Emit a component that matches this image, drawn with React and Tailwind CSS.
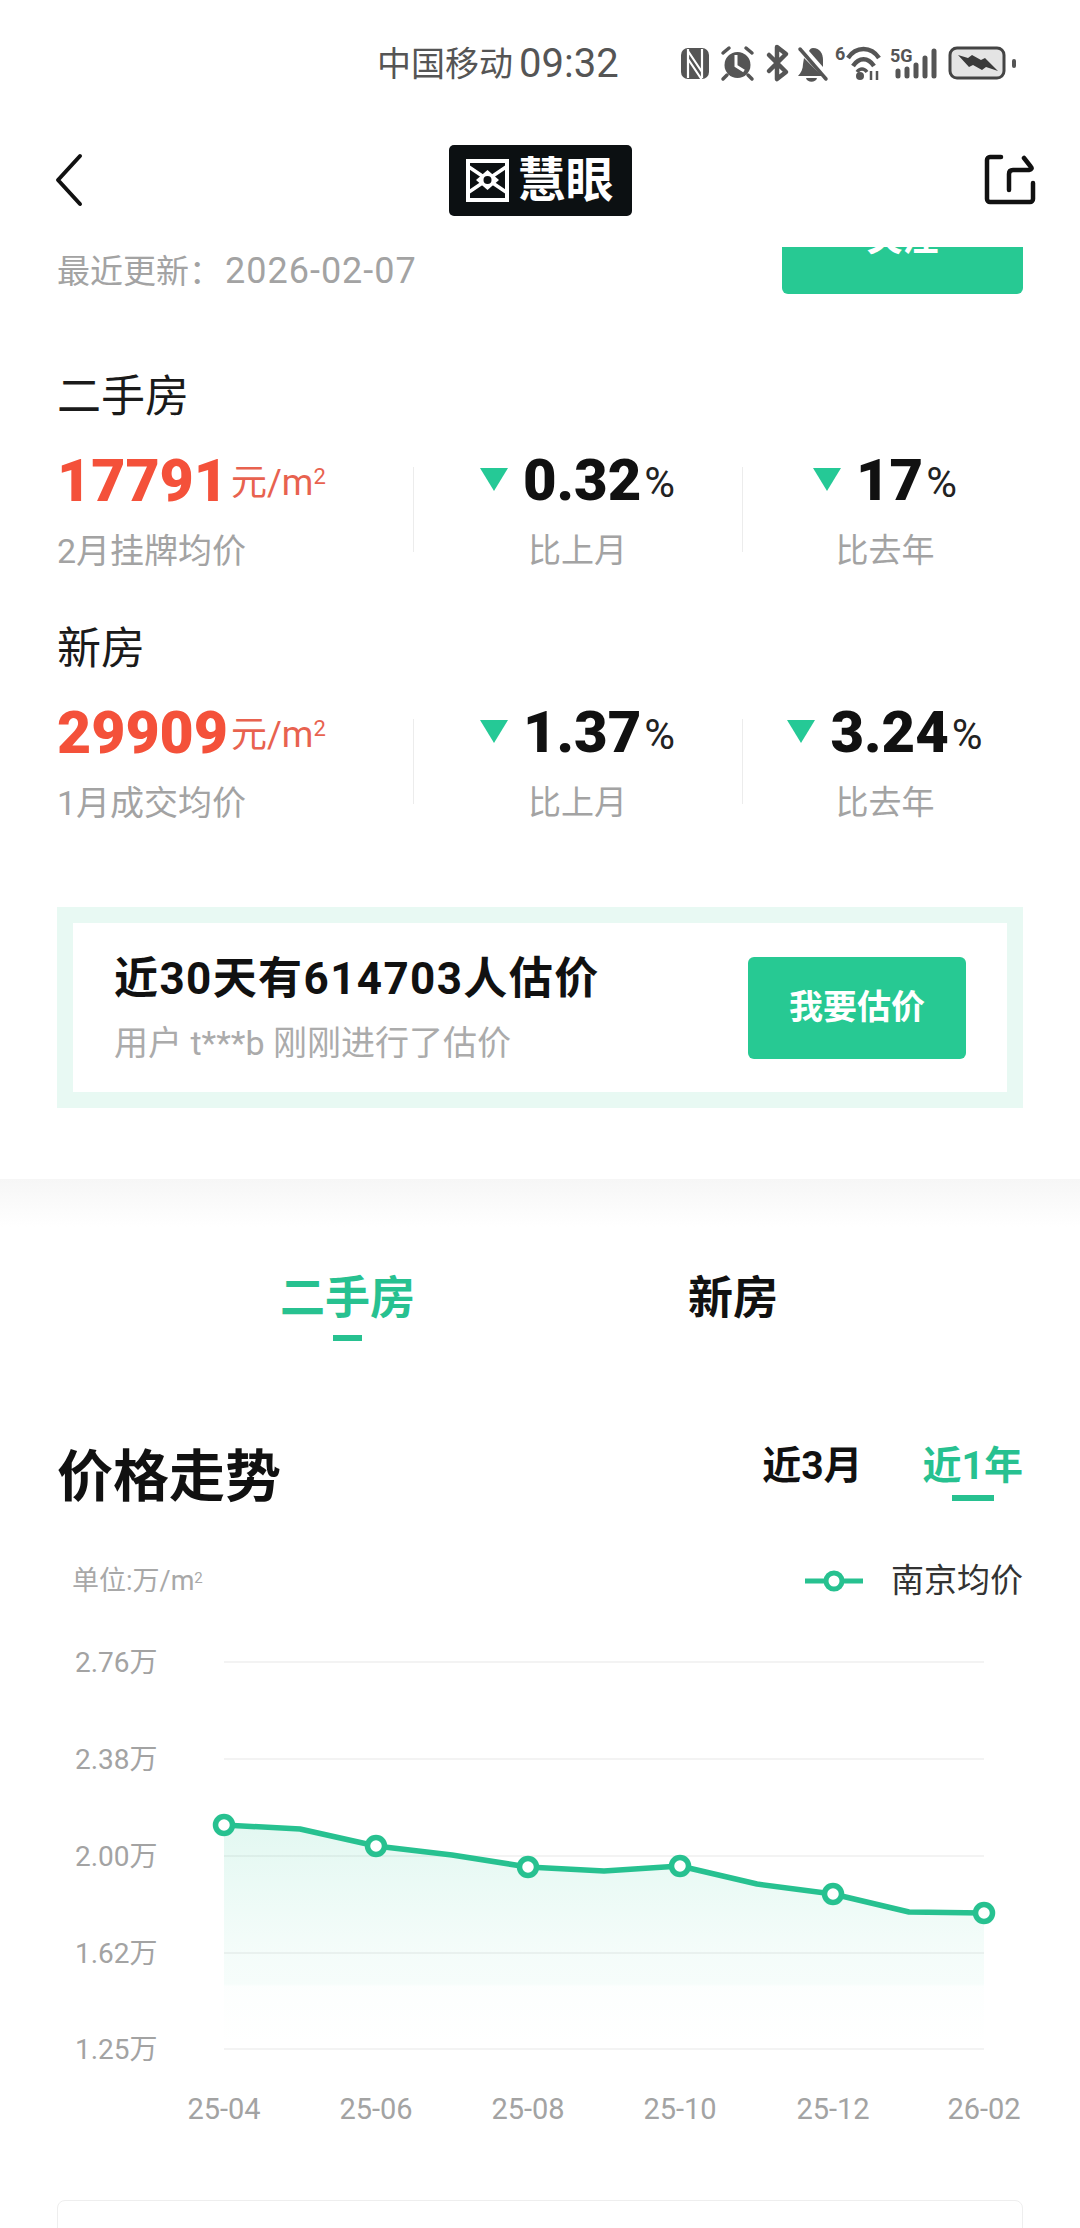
const FONT = "font-['Roboto','Noto_Sans_CJK_SC',sans-serif]";

function Tri({ className = "" }) {
  return (
    <svg width="28" height="23" viewBox="0 0 28 23" className={className}>
      <path d="M0 0H28L14 23Z" fill="#25c996" />
    </svg>
  );
}

function StatusIcons() {
  return (
    <svg width="344" height="48" viewBox="0 0 344 48" fill="none" className="block">
      {/* NFC */}
      <rect x="5" y="8" width="28" height="31" rx="7" fill="#555" />
      <path d="M12 9V38M26 9V38M12 11L26 32M12 19L26 40" stroke="#fff" strokeWidth="2.2" />
      {/* alarm */}
      <circle cx="61.5" cy="25" r="13" fill="#555" />
      <path d="M60 15V26L68 31" stroke="#fff" strokeWidth="3" />
      <path d="M47 13L53 8M76 13L70 8M51 35L47 39M72 35L76 39" stroke="#555" strokeWidth="3.5" strokeLinecap="round" />
      {/* bluetooth */}
      <path d="M93 15L110 32L101 39V7L110 14L93 31" stroke="#555" strokeWidth="4.5" strokeLinejoin="round" strokeLinecap="round" />
      {/* mute bell */}
      <path d="M137 8C144 8 147 14 147 20V27L133 11C134 9 135 8 137 8Z" fill="#555" />
      <path d="M128 18L146 36H122C125 33 127 29 127 24Z" fill="#555" />
      <path d="M130 38H141C140 43 131 43 130 38Z" fill="#555" />
      <path d="M124 9L150 39" stroke="#555" strokeWidth="3.5" strokeLinecap="round" />
      {/* wifi */}
      <text x="159" y="20" fontSize="18" fontWeight="700" fill="#555" fontFamily="Roboto">6</text>
      <path d="M172 18C180 6 195 6 203 18M177 26C183 17 192 17 198 26" stroke="#555" strokeWidth="4.5" />
      <path d="M181 32C184 28 188 28 191 32" stroke="#555" strokeWidth="3.5" />
      <circle cx="184" cy="36" r="4" fill="#555" />
      <path d="M195 31V40M201 31V40" stroke="#555" strokeWidth="2.5" />
      {/* 5G */}
      <text x="214" y="22" fontSize="18" fontWeight="700" fill="#555" fontFamily="Roboto">5G</text>
      <path d="M222 31V36M231 29V36M240 25V36M249 18V36M258 11V36" stroke="#555" strokeWidth="5" strokeLinecap="round" />
      {/* battery */}
      <rect x="274" y="8" width="54" height="30" rx="7" fill="#e4e4e4" stroke="#444" strokeWidth="3" />
      <path d="M282 15L292 18L296 15L305 20L309 18L322 31L310 27L306 30L297 25L293 27Z" fill="#3a3a3a" />
      <rect x="336" y="19" width="4" height="9" rx="2" fill="#555" />
    </svg>
  );
}

function Logo() {
  return (
    <svg width="43" height="43" viewBox="0 0 43 43" fill="none" className="block">
      <rect x="2" y="2" width="39" height="39" stroke="#fff" strokeWidth="4" />
      <path d="M3 8L40 33M40 8L3 33" stroke="#fff" strokeWidth="3.5" />
      <path d="M21.5 11L33 21L21.5 31L10 21Z" fill="#fff" />
      <circle cx="21.5" cy="21" r="4" fill="#0c1012" />
    </svg>
  );
}

function StatCol({ value, label }) {
  return (
    <div className="relative flex flex-col items-center">
      <div className="absolute left-0 top-[17px] h-[85px] w-px bg-[#ececec]" />
      <div className="flex h-[60px] items-center">
        <Tri className="mr-[15px] -mt-[2px]" />
        <span className="text-[58px] leading-none font-black text-[#111]">{value}</span>
        <span className="ml-[3px] mt-[6px] text-[42px] leading-none text-[#222]">%</span>
      </div>
      <div className="mt-[19px] text-[33px] leading-[44px] text-[#a3a3a3]">{label}</div>
    </div>
  );
}

function PriceRow({ title, price, label, a, b }) {
  return (
    <div>
      <div className="text-[44px] leading-[60px] text-[#1a1a1a]">{title}</div>
      <div className="mt-[23px] grid w-[971px] grid-cols-[356px_329px_286px]">
        <div className="flex flex-col">
          <div className="flex h-[60px] items-center">
            <span className="text-[59px] leading-none font-black text-[#f4513a]">{price}</span>
            <span className="ml-[3px] mt-[6px] text-[36px] leading-none text-[#e8624f]">
              元/m<sup className="text-[22px] leading-none">2</sup>
            </span>
          </div>
          <div className="mt-[19px] text-[34px] leading-[44px] text-[#a3a3a3]">{label}</div>
        </div>
        <StatCol value={a} label="比上月" />
        <StatCol value={b} label="比去年" />
      </div>
    </div>
  );
}

const pts = [
  [224, 1825], [300, 1829], [376, 1846], [452, 1855], [528, 1867], [604, 1871],
  [680, 1866], [757, 1884], [833, 1894], [909, 1912], [984, 1913],
];
const marks = [0, 2, 4, 6, 8, 10];
const top = 1640;

function Chart() {
  const line = pts.map((p) => `${p[0]},${p[1] - top}`).join(" ");
  const area = `224,${2049 - top} ${line} 984,${2049 - top}`;
  const grid = [1662, 1759, 1856, 1953, 2049];
  const ylab = ["2.76万", "2.38万", "2.00万", "1.62万", "1.25万"];
  const xlab = ["25-04", "25-06", "25-08", "25-10", "25-12", "26-02"];
  return (
    <svg width="1080" height="500" viewBox="0 0 1080 500" className="block">
      <defs>
        <linearGradient id="fillG" gradientUnits="userSpaceOnUse" x1="0" y1={1825 - top} x2="0" y2={2049 - top}>
          <stop offset="0" stopColor="#25c996" stopOpacity="0.13" />
          <stop offset="0.55" stopColor="#25c996" stopOpacity="0.05" />
          <stop offset="0.71" stopColor="#25c996" stopOpacity="0.04" />
          <stop offset="0.72" stopColor="#25c996" stopOpacity="0.012" />
          <stop offset="1" stopColor="#25c996" stopOpacity="0" />
        </linearGradient>
      </defs>
      {grid.map((y, i) => (
        <g key={y}>
          <line x1="224" x2="984" y1={y - top} y2={y - top} stroke="#f3f3f3" strokeWidth="2" />
          <text x="75" y={y - top + 10} fontSize="28" fill="#a3a3a3">{ylab[i]}</text>
        </g>
      ))}
      <polygon points={area} fill="url(#fillG)" />
      <polyline points={line} fill="none" stroke="#27c190" strokeWidth="5.5" strokeLinejoin="round" />
      {marks.map((i) => (
        <circle key={i} cx={pts[i][0]} cy={pts[i][1] - top} r="8.5" fill="#fff" stroke="#27c190" strokeWidth="5.5" />
      ))}
      {xlab.map((t, i) => (
        <text key={t} x={pts[marks[i]][0]} y={2119 - top} fontSize="29" fill="#a3a3a3" textAnchor="middle">{t}</text>
      ))}
    </svg>
  );
}

export default function App() {
  return (
    <div className={`${FONT} h-[2228px] w-[1080px] overflow-hidden bg-white`}>
      {/* Status bar */}
      <div className="flex h-[130px] items-start pl-[377px] pt-[42px]">
        <span className="w-[136px] text-[34px] leading-[44px] text-[#555]">中国移动</span>
        <span className="ml-[6px] w-[103px] text-[40px] leading-[44px] text-[#555]">09:32</span>
        <div className="-mt-[2px] ml-[54px]"><StatusIcons /></div>
      </div>
      {/* Header */}
      <div className="relative flex h-[117px] items-start justify-center pt-[15px]">
        <svg width="30" height="54" viewBox="0 0 30 54" fill="none" className="absolute left-[54px] top-[23px]">
          <path d="M26 3L4 27L26 51" stroke="#111" strokeWidth="4" strokeLinecap="round" strokeLinejoin="round" />
        </svg>
        <div className="flex h-[71px] w-[183px] items-center justify-center gap-[8px] rounded-[5px] bg-[#0c1012]">
          <Logo />
          <span className="text-[48px] leading-none font-bold text-white">慧眼</span>
        </div>
        <svg width="54" height="54" viewBox="0 0 54 54" fill="none" className="absolute left-[983px] top-[23px]">
          <path d="M18 4H7A3 3 0 0 0 4 7V46A3 3 0 0 0 7 49H47A3 3 0 0 0 50 46V30" stroke="#111" strokeWidth="4.5" strokeLinecap="round" strokeLinejoin="round" />
          <path d="M26 37V21C26 18.500 27.500 17 30 17H46C49 16.500 49 15 48 14L41 5" stroke="#111" strokeWidth="4.5" strokeLinecap="round" strokeLinejoin="round" />
        </svg>
      </div>
      {/* Summary */}
      <div className="px-[57px]">
        <div className="flex items-start justify-between">
          <div className="pt-[2px] text-[33px] leading-[44px] text-[#a3a3a3]">最近更新：<span className="ml-[3px] text-[36px] tracking-[1px]">2026-02-07</span></div>
          <div className="h-[47px] w-[241px] overflow-hidden rounded-b-[6px] bg-[#27c993] text-center">
            <div className="-mt-[26px] text-[36px] leading-[36px] font-bold text-white">关注</div>
          </div>
        </div>
        <div className="mt-[73px]"><PriceRow title="二手房" price="17791" label="2月挂牌均价" a="0.32" b="17" /></div>
        <div className="mt-[46px]"><PriceRow title="新房" price="29909" label="1月成交均价" a="1.37" b="3.24" /></div>
        {/* Banner */}
        <div className="mt-[82px] border-[16px] border-[#e8f9f3] bg-white">
          <div className="flex h-[169px] items-center justify-between pl-[41px] pr-[41px]">
            <div>
              <div className="text-[44px] leading-[56px] font-bold tracking-[1.4px] text-[#111]">近30天有614703人估价</div>
              <div className="mt-[14px] text-[34px] leading-[44px] text-[#ababab]">用户 t***b 刚刚进行了估价</div>
            </div>
            <div className="flex h-[102px] w-[218px] items-center justify-center rounded-[6px] bg-[#27c993] text-[34px] font-bold text-white">我要估价</div>
          </div>
        </div>
      </div>
      {/* Section break */}
      <div className="mt-[71px] h-[48px] bg-gradient-to-b from-[#f6f6f6] to-white" />
      {/* Tabs */}
      <div className="flex pl-[280px] pt-[42px]">
        <div className="flex w-[135px] flex-col items-center">
          <span className="whitespace-nowrap text-[45px] leading-[60px] font-bold text-[#27c190]">二手房</span>
          <div className="mt-[6px] h-[6px] w-[29px] bg-[#27c190]" />
        </div>
        <span className="ml-[273px] whitespace-nowrap text-[45px] leading-[60px] font-bold text-[#111]">新房</span>
      </div>
      {/* Trend title */}
      <div className="mt-[100px] flex items-start justify-between px-[57px]">
        <span className="text-[56px] leading-[72px] font-bold text-[#111]">价格走势</span>
        <div className="flex gap-[60px]">
          <span className="text-[39px] leading-[50px] font-bold text-[#111]">近3月</span>
          <div className="flex flex-col items-center">
            <span className="text-[39px] leading-[50px] font-bold text-[#27c190]">近1年</span>
            <div className="mt-[4px] h-[6px] w-[42px] bg-[#27c190]" />
          </div>
        </div>
      </div>
      {/* Legend */}
      <div className="mt-[46px] flex items-center justify-between pl-[72px] pr-[57px]">
        <span className="text-[27px] leading-[44px] text-[#a8a8a8]">单位:万/m<sup className="text-[15px] leading-none">2</sup></span>
        <div className="flex items-center">
          <svg width="58" height="24" viewBox="0 0 58 24" className="mr-[28px]">
            <line x1="0" x2="58" y1="12" y2="12" stroke="#27c190" strokeWidth="5" />
            <circle cx="29" cy="12" r="8" fill="#fff" stroke="#27c190" strokeWidth="5" />
          </svg>
          <span className="text-[33px] leading-[44px] text-[#333]">南京均价</span>
        </div>
      </div>
      {/* Chart */}
      <div className="mt-[37px]"><Chart /></div>
      <div className="mx-[57px] mt-[60px] h-[60px] rounded-t-[8px] border border-[#eee]" />
    </div>
  );
}
